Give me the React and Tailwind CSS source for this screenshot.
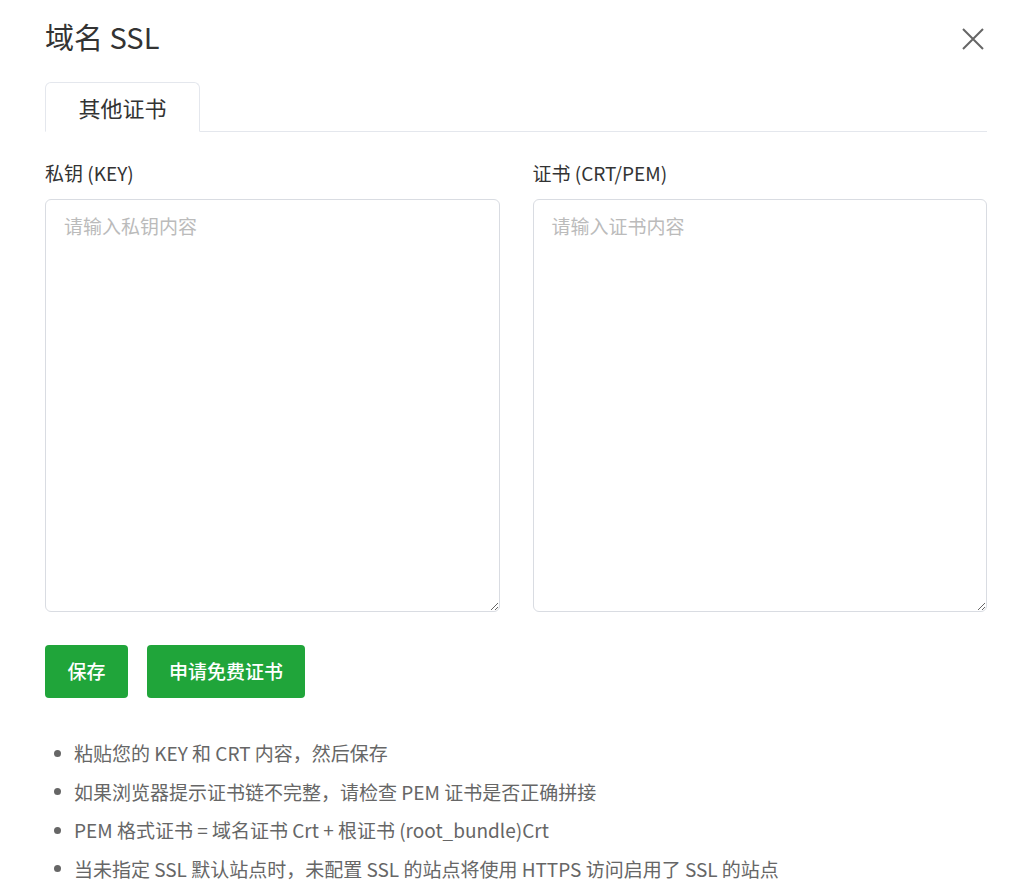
import React, { useState } from 'react';

const font = { fontFamily: '"Noto Sans CJK SC", "Noto Sans", sans-serif' };

const tips = [
  '粘贴您的 KEY 和 CRT 内容，然后保存',
  '如果浏览器提示证书链不完整，请检查 PEM 证书是否正确拼接',
  'PEM 格式证书 = 域名证书 Crt + 根证书 (root_bundle)Crt',
  '当未指定 SSL 默认站点时，未配置 SSL 的站点将使用 HTTPS 访问启用了 SSL 的站点',
];

const CertField = ({ label, placeholder, value, onChange }) => (
  <div className="flex flex-col">
    <label className="text-[19px] leading-[26px] text-[#333] mb-[13px]">{label}</label>
    <textarea
      className="h-[413px] w-full rounded-md border border-[#d9dce2] px-[18px] py-[12px] text-[19px] leading-[1.5] text-[#333] placeholder:text-[#bbb] outline-none focus:border-[#20a53a]"
      placeholder={placeholder}
      value={value}
      onChange={(e) => onChange(e.target.value)}
    />
  </div>
);

const App = () => {
  const [key, setKey] = useState('');
  const [cert, setCert] = useState('');

  return (
    <div className="min-h-screen bg-white pl-[45px] pr-[37px]" style={font}>
      {/* header */}
      <div className="flex h-[78px] items-center justify-between">
        <h1 className="mb-[4px] text-[29px] font-normal text-[#333]">域名 SSL</h1>
        <button className="mr-[2px] text-[#666]" aria-label="close">
          <svg width="24" height="24" viewBox="0 0 24 24" fill="none" stroke="currentColor" strokeWidth="2">
            <path d="M2 2L22 22M22 2L2 22" />
          </svg>
        </button>
      </div>

      {/* tabs */}
      <div className="mt-1 flex border-b border-[#e4e7ed]">
        <div className="-mb-px flex h-[50px] w-[155px] items-center justify-center rounded-t-md border border-[#e4e7ed] border-b-white bg-white text-[22px] text-[#333]">
          其他证书
        </div>
      </div>

      {/* key / cert inputs */}
      <div className="mt-[28px] grid grid-cols-2 gap-[33px]">
        <CertField label="私钥 (KEY)" placeholder="请输入私钥内容" value={key} onChange={setKey} />
        <CertField label="证书 (CRT/PEM)" placeholder="请输入证书内容" value={cert} onChange={setCert} />
      </div>

      <div className="mt-[33px] flex gap-[19px]">
        <button className="h-[53px] w-[83px] rounded bg-[#20a53a] text-[19px] font-medium text-white hover:bg-[#1c9434]">
          保存
        </button>
        <button className="h-[53px] w-[158px] rounded bg-[#20a53a] text-[19px] font-medium text-white hover:bg-[#1c9434]">
          申请免费证书
        </button>
      </div>

      <ul className="mt-[36px]">
        {tips.map((t) => (
          <li key={t} className="flex items-center text-[19px] leading-[38.5px] text-[#666]">
            <span className="ml-[9px] mr-[13px] h-[7px] w-[7px] rounded-full bg-[#666]" />
            {t}
          </li>
        ))}
      </ul>
    </div>
  );
};

export default App;
